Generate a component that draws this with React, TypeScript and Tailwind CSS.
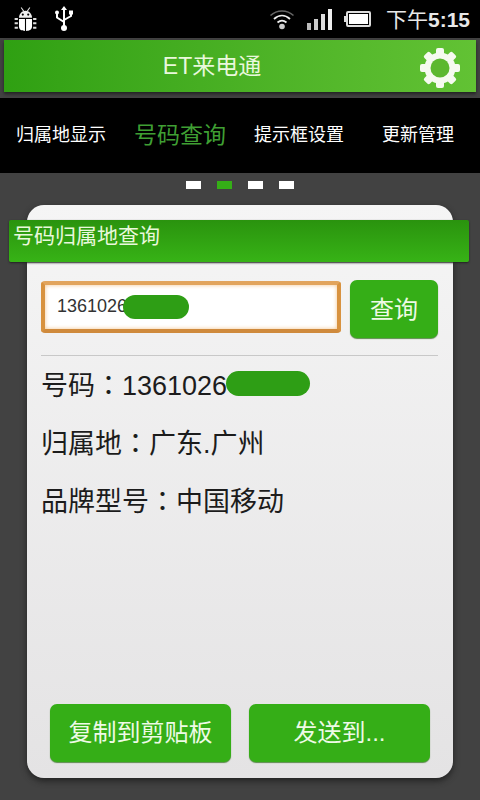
const FONT = '"Liberation Sans", "Noto Sans CJK SC", sans-serif';
const FONT_TC = '"Liberation Sans", "Noto Sans CJK TC", sans-serif';

function AndroidIcon() {
  return (
    <svg width="25" height="25" viewBox="2 1 22 23" className="ml-[13px]">
      <path d="M9 1.500l2.500 3.500M17 1.500l-2.500 3.500" stroke="#ddd" strokeWidth="1" />
      <path d="M7 11c0-4 3-6.500 6-6.500s6 2.500 6 6.500z" fill="#eee" />
      <circle cx="10.500" cy="8" r="1" fill="#000" />
      <circle cx="15.500" cy="8" r="1" fill="#000" />
      <path d="M7 12h5.500v11c-3 0-5.500-1-5.500-4zM13.500 12H19v7c0 3-2.500 4-5.500 4z" fill="#fff" />
      <path d="M3 12h3M3 16h3M3 20h3M20 12h3M20 16h3M20 20h3" stroke="#ddd" strokeWidth="1.800" />
    </svg>
  );
}

function UsbIcon() {
  return (
    <svg width="22" height="26" viewBox="0 0 22 26" className="ml-[15px]">
      <path d="M11 3v17M4 8v3.500l7 4.500M18 8v2l-7 4" stroke="#fff" strokeWidth="2" fill="none" />
      <path d="M11 0l3 4H8z" fill="#fff" />
      <circle cx="4" cy="6.500" r="2" fill="#fff" />
      <rect x="16" y="4.500" width="4" height="4" fill="#fff" />
      <circle cx="11" cy="22" r="3" fill="#fff" />
    </svg>
  );
}

function WifiIcon() {
  return (
    <svg width="26" height="22" viewBox="0 0 26 22">
      <path d="M1.500 7.500C8 1.500 18 1.500 24.500 7.500" stroke="#666" strokeWidth="1.500" fill="none" />
      <path d="M5 11c5-4.500 11-4.500 16 0" stroke="#eee" strokeWidth="1.800" fill="none" />
      <path d="M8.500 14.500c3-2.500 6-2.500 9 0" stroke="#eee" strokeWidth="1.800" fill="none" />
      <circle cx="13" cy="18.500" r="2.800" fill="#ccc" />
    </svg>
  );
}

function SignalIcon() {
  return (
    <div className="ml-[12px] flex h-[21px] items-end gap-[3px]">
      <div className="h-[7px] w-[4px] bg-[#bbb]" />
      <div className="h-[11px] w-[4px] bg-[#ccc]" />
      <div className="h-[16px] w-[4px] bg-[#ddd]" />
      <div className="h-[21px] w-[4px] bg-[#eee]" />
    </div>
  );
}

function BatteryIcon() {
  return (
    <div className="ml-[12px] flex items-center">
      <div className="h-[6px] w-[2px] bg-[#ddd]" />
      <div className="h-[16px] w-[25px] rounded-[2px] border-2 border-[#ddd] bg-black p-[1px]">
        <div className="h-full w-full bg-white" />
      </div>
    </div>
  );
}

function GearIcon() {
  const teeth = [0, 45, 90, 135];
  return (
    <svg width="42" height="42" viewBox="0 0 42 42">
      {teeth.map((a) => (
        <rect key={a} x="17" y="1" width="8" height="40" rx="2" fill="#f6faf0" transform={`rotate(${a} 21 21)`} />
      ))}
      <circle cx="21" cy="21" r="15.500" fill="#f6faf0" />
      <circle cx="21" cy="21" r="9.500" fill="#5cb82f" />
    </svg>
  );
}

function GreenButton({ label, className }: { label: string; className: string }) {
  return (
    <button className={`flex items-center justify-center rounded-[7px] bg-[#35ae17] text-[24px] text-[#eefae6] shadow-[0_1px_1px_#5b8a4c] ${className}`}>
      {label}
    </button>
  );
}

export default function App() {
  return (
    <div className="flex h-[800px] w-[480px] flex-col overflow-hidden bg-[#424242]" style={{ fontFamily: FONT }}>
      {/* Status bar */}
      <div className="flex h-[38px] shrink-0 items-center bg-black">
        <AndroidIcon />
        <UsbIcon />
        <div className="ml-auto flex items-center pr-[10px]">
          <WifiIcon />
          <SignalIcon />
          <BatteryIcon />
          <span className="ml-[15px] text-[21px] leading-none text-[#e8e8e8]">
            下午<span className="font-bold">5:15</span>
          </span>
        </div>
      </div>

      {/* Title bar */}
      <div className="h-[60px] shrink-0 px-[4px] pt-[2px]">
        <div className="relative flex h-[52px] items-center justify-center bg-gradient-to-r from-[#2fa012] to-[#62c234] pr-[56px] shadow-[0_2px_3px_#222]">
          <span className="text-[23px] text-[#e9f8dc]">ET来电通</span>
          <div className="absolute right-[15px] top-[7px]">
            <GearIcon />
          </div>
        </div>
      </div>

      {/* Tabs */}
      <div className="flex h-[75px] shrink-0 items-center bg-black text-white">
        <span className="w-[122px] text-center text-[18px]">归属地显示</span>
        <span className="w-[116px] text-center text-[23px] text-[#3f9f33]">号码查询</span>
        <span className="w-[122px] text-center text-[18px]">提示框设置</span>
        <span className="w-[116px] text-center text-[18px]">更新管理</span>
      </div>

      {/* Pager dots */}
      <div className="mt-[8px] flex h-[8px] shrink-0 justify-center gap-[16px]">
        <div className="w-[15px] bg-white" />
        <div className="w-[15px] bg-[#35ae17]" />
        <div className="w-[15px] bg-white" />
        <div className="w-[15px] bg-white" />
      </div>

      {/* Card */}
      <div className="mx-[27px] mt-[16px] flex h-[573px] flex-col rounded-[17px] bg-gradient-to-b from-[#f5f5f5] to-[#e4e3e4] pt-[15px] shadow-[0_3px_6px_#222]">
        <div className="-ml-[18px] -mr-[16px] h-[42px] rounded-[2px] bg-gradient-to-b from-[#2a930e] to-[#37b316] pl-[4px] text-[21px] leading-[31px] text-[#e9f8dc] shadow-[0_1px_2px_#222]">
          号码归属地查询
        </div>

        <div className="mt-[18px] flex items-start pl-[14px]">
          <div className="relative mt-[1px] flex h-[52px] w-[300px] items-center rounded-[4px] border-[4px] border-b-[#cf8a3c] border-l-[#d8923f] border-r-[#d8923f] border-t-[#e2a45c] bg-white pb-[2px] pl-[12px] text-[18px] text-[#333] shadow-[inset_0_0_4px_#f3c48c]">
            1361026
            <div className="absolute left-[78px] top-[10px] h-[24px] w-[66px] rounded-full bg-[#2e9e15]" />
          </div>
          <GreenButton label="查询" className="ml-[9px] h-[58px] w-[88px] pt-[2px]" />
        </div>

        <div className="ml-[14px] mr-[15px] mt-[17px] h-px bg-[#c8c8c8]" />

        <div className="flex flex-col gap-[22px] pl-[14px] pt-[12px] text-[27px] leading-[36px] text-[#1c1c1c]" style={{ fontFamily: FONT_TC }}>
          <div className="relative">
            号码：1361026
            <div className="absolute left-[185px] top-[3px] h-[25px] w-[84px] rounded-full bg-[#2e9e15]" />
          </div>
          <div>归属地：广东.广州</div>
          <div>品牌型号：中国移动</div>
        </div>

        <div className="mt-auto flex gap-[18px] pb-[16px] pl-[23px]">
          <GreenButton label="复制到剪贴板" className="h-[58px] w-[181px]" />
          <GreenButton label="发送到..." className="h-[58px] w-[181px]" />
        </div>
      </div>
    </div>
  );
}
